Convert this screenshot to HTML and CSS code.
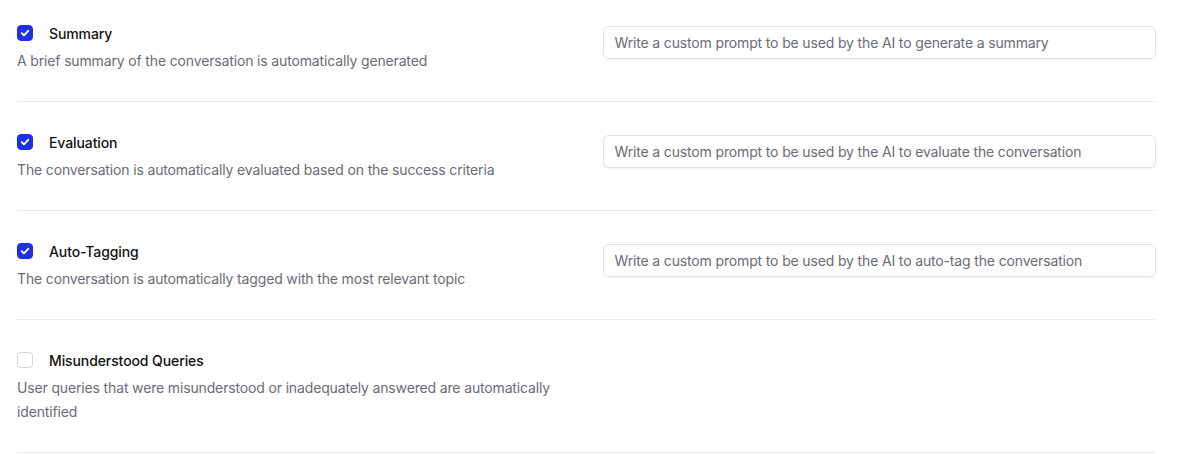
FILE: index.html
```html
<!DOCTYPE html>
<html lang="en">
<head>
<meta charset="utf-8">
<link rel="stylesheet" href="styles.css">
</head>
<body>
<div class="list">
  <div class="row">
    <div class="info">
      <label class="title"><span class="box checked"><svg viewBox="0 0 16 16"><path d="M4.3 8.2l2.5 2.5 4.9-5.2" /></svg></span>Summary</label>
      <p class="desc">A brief summary of the conversation is automatically generated</p>
    </div>
    <div class="field"><input class="prompt" type="text" placeholder="Write a custom prompt to be used by the AI to generate a summary"></div>
  </div>
  <div class="row">
    <div class="info">
      <label class="title"><span class="box checked"><svg viewBox="0 0 16 16"><path d="M4.3 8.2l2.5 2.5 4.9-5.2" /></svg></span>Evaluation</label>
      <p class="desc">The conversation is automatically evaluated based on the success criteria</p>
    </div>
    <div class="field"><input class="prompt" type="text" placeholder="Write a custom prompt to be used by the AI to evaluate the conversation"></div>
  </div>
  <div class="row">
    <div class="info">
      <label class="title"><span class="box checked"><svg viewBox="0 0 16 16"><path d="M4.3 8.2l2.5 2.5 4.9-5.2" /></svg></span>Auto-Tagging</label>
      <p class="desc">The conversation is automatically tagged with the most relevant topic</p>
    </div>
    <div class="field"><input class="prompt" type="text" placeholder="Write a custom prompt to be used by the AI to auto-tag the conversation"></div>
  </div>
  <div class="row">
    <div class="info">
      <label class="title"><span class="box"></span>Misunderstood Queries</label>
      <p class="desc">User queries that were misunderstood or inadequately answered are automatically identified</p>
    </div>
    <div class="field"></div>
  </div>
</div>
</body>
</html>
```
FILE: styles.css
```css
* { box-sizing: border-box; }
html, body { margin: 0; padding: 0; background: #fff; }
body {
  font-family: Inter, "Noto Sans", sans-serif;
  font-size: 14px;
  color: #111;
}
.list {
  width: 1139px;
  margin-left: 17px;
}
.row {
  display: grid;
  grid-template-columns: 1fr 1fr;
  column-gap: 32px;
  padding: 30px 0 28px;
  border-bottom: 1px solid #ececef;
}
.row:first-child { padding-top: 23px; }
.info { min-width: 0; }
.title {
  display: flex;
  align-items: center;
  height: 20px;
  font-weight: 500;
  font-size: 14px;
  color: #121212;
  letter-spacing: -0.1px;
}
.box {
  width: 16px;
  height: 16px;
  margin-right: 16px;
  border-radius: 4px;
  border: 1px solid #d4d4d8;
  background: #fff;
  display: inline-flex;
  flex: none;
}
.box.checked {
  background: #1f2fe6;
  border-color: #1f2fe6;
}
.box svg {
  width: 14px;
  height: 14px;
  fill: none;
  stroke: #fff;
  stroke-width: 2.2;
  stroke-linecap: round;
  stroke-linejoin: round;
}
.desc {
  margin: 6px 0 0;
  line-height: 24px;
  color: #6b6b76;
  font-size: 14px;
  letter-spacing: -0.15px;
}
.field { padding-top: 3px; }
.prompt {
  display: block;
  width: 100%;
  height: 33px;
  padding: 0 11px;
  border: 1px solid #e2e2e5;
  border-radius: 6px;
  box-shadow: 0 1px 2px rgba(0,0,0,0.05);
  font-family: inherit;
  font-size: 14px;
  color: #111;
  background: #fff;
  outline: none;
}
.prompt::placeholder { color: #6b6b76; letter-spacing: -0.15px; }
```
